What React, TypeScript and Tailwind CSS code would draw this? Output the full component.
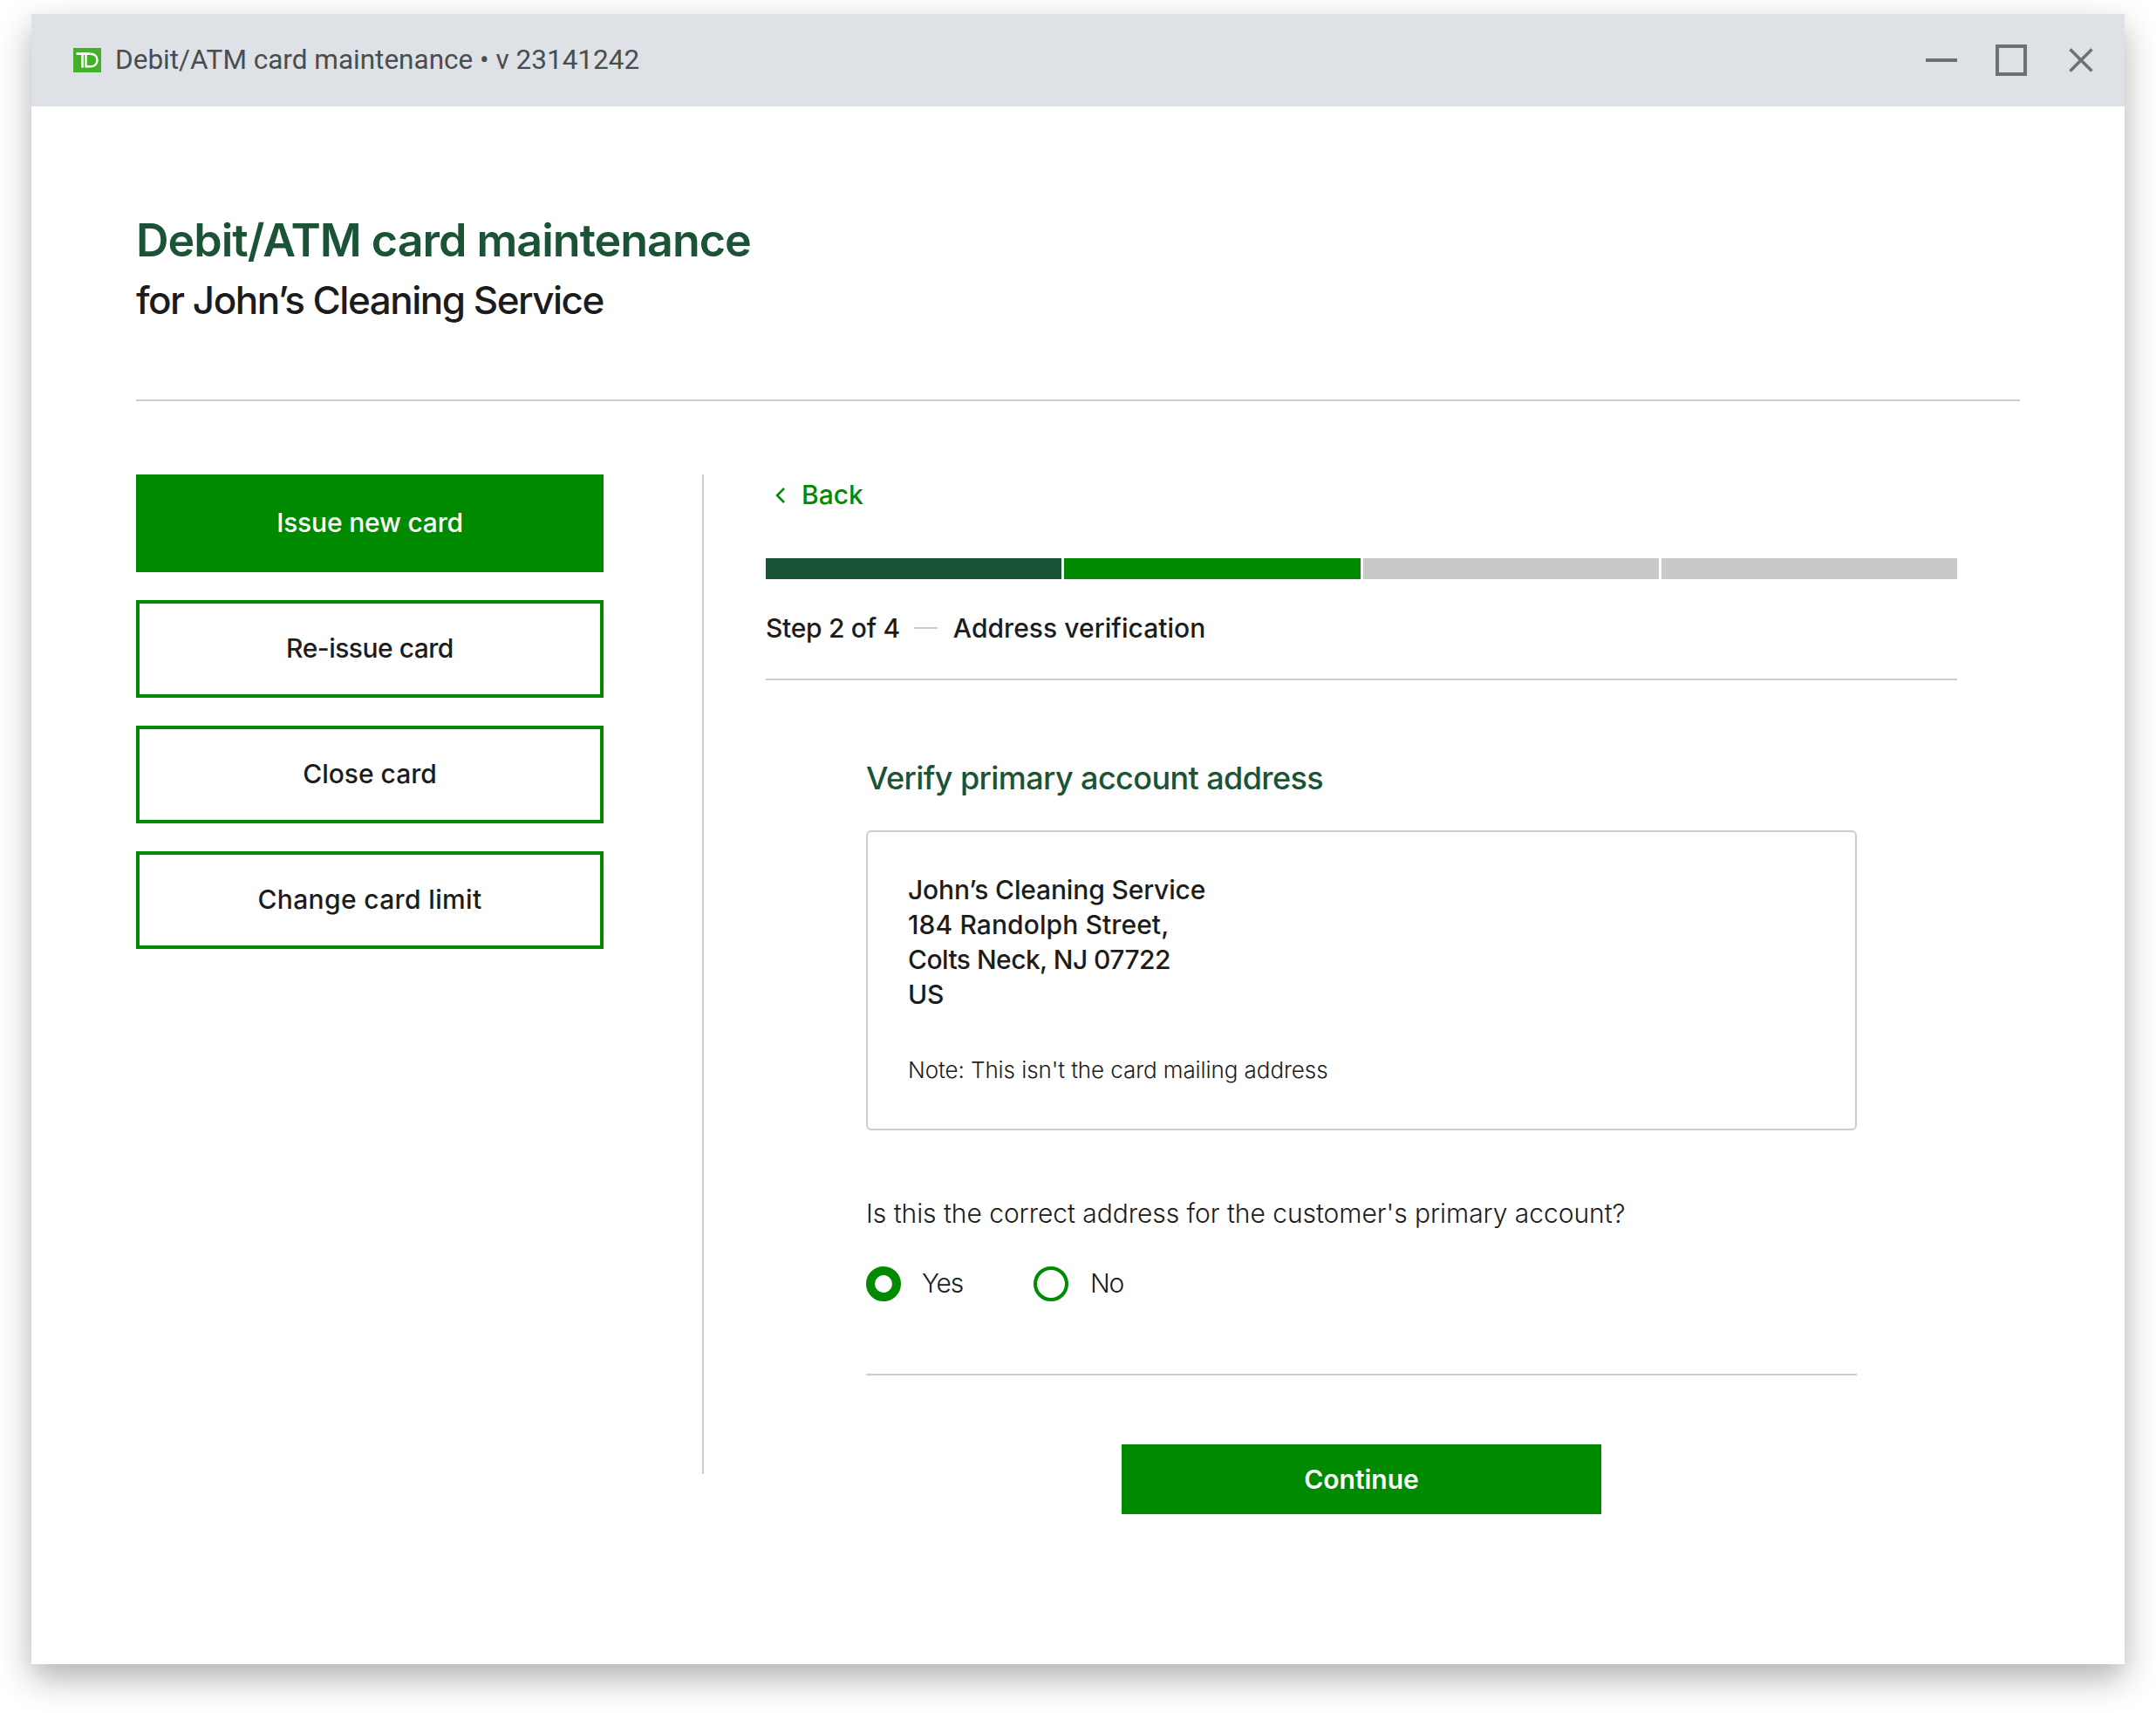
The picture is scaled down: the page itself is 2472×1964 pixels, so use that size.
const sideButtons = [
  { label: 'Re-issue card', tracking: 'tracking-[-0.5px]' },
  { label: 'Close card', tracking: 'tracking-normal' },
  { label: 'Change card limit', tracking: 'tracking-[0.35px]' },
];

function TdLogo() {
  return (
    <svg width="32" height="28" viewBox="0 0 32 28" className="shrink-0">
      <rect width="32" height="28" fill="#43b02a" />
      <path d="M3.500 6.700H19.500M10.500 6.700V22.500" fill="none" stroke="#fff" strokeWidth="2.700" />
      <path d="M14.500 6.700V21.300h5c5 0 8-3 8-7.300s-3-7.300-8-7.300" fill="none" stroke="#fff" strokeWidth="2.500" />
    </svg>
  );
}

function WindowControls() {
  return (
    <div className="flex items-center">
      <div className="w-9 h-1 bg-[#707070]" />
      <div className="w-9 h-9 border-4 border-[#707070] ml-11" />
      <svg width="28" height="28" viewBox="0 0 28 28" className="ml-12">
        <path d="M1.500 1.500l25 25M26.500 1.500l-25 25" stroke="#707070" strokeWidth="3.500" fill="none" />
      </svg>
    </div>
  );
}

export default function App() {
  return (
    <div className="w-[2472px] h-[1964px] bg-white pl-9 pt-4 font-['Inter',sans-serif] text-[#1c1c1c]">
      <div className="w-[2400px] h-[1892px] bg-white flex flex-col shadow-[0_16px_36px_rgba(0,0,0,0.31)]">
        {/* Title bar */}
        <div className="h-[106px] bg-[#dee1e5] flex items-center justify-between pl-12 pr-9">
          <div className="flex items-center gap-4">
            <TdLogo />
            <span className="font-['Roboto',sans-serif] text-[31.5px] text-[#4a4d50]">Debit/ATM card maintenance • v 23141242</span>
          </div>
          <WindowControls />
        </div>

        <div className="flex-1 px-[120px]">
          {/* Heading */}
          <div className="h-[338px] border-b-2 border-[#cccccc] pt-[123px]">
            <h1 className="text-[52px] leading-[62px] font-semibold tracking-[-1px] text-[#1a5336]">Debit/ATM card maintenance</h1>
            <h2 className="text-[44px] leading-[52px] mt-[11px] font-medium tracking-[-1.5px]">for John’s Cleaning Service</h2>
          </div>

          <div className="flex pt-[84px]">
            {/* Left actions */}
            <div className="w-[536px] flex flex-col gap-8">
              <div className="h-[112px] pb-[2px] bg-[#008a00] text-white text-[30px] font-medium tracking-[-0.2px] flex items-center justify-center">Issue new card</div>
              {sideButtons.map((item) => (
                <div key={item.label} className={`h-[112px] pb-[2px] border-4 border-[#008a00] text-[30px] font-medium flex items-center justify-center ${item.tracking}`}>
                  {item.label}
                </div>
              ))}
            </div>

            <div className="w-[2px] h-[1146px] bg-[#cccccc] ml-[113px]" />

            {/* Step content */}
            <div className="w-[1366px] ml-[71px]">
              <div className="flex items-center h-[48px] pb-[1px] text-[30px] font-medium text-[#008a00]">
                <svg width="13" height="20" viewBox="0 0 13 20" className="ml-[10px]">
                  <path d="M11 2L3 10l8 8" fill="none" stroke="#008a00" strokeWidth="2.500" />
                </svg>
                <span className="ml-[18px]">Back</span>
              </div>

              <div className="flex gap-[3px] mt-[48px]">
                <div className="h-6 flex-1 bg-[#1a5336]" />
                <div className="h-6 flex-1 bg-[#008a00]" />
                <div className="h-6 flex-1 bg-[#c9c9c9]" />
                <div className="h-6 flex-1 bg-[#c9c9c9]" />
              </div>

              <div className="flex items-center h-[116px] border-b-2 border-[#cccccc] pb-[2px] text-[30px] font-medium">
                <span className="tracking-[-0.3px]">Step 2 of 4</span>
                <div className="w-[27px] h-[2px] bg-[#cccccc] ml-4 mr-[18px]" />
                <span className="tracking-[0.05px]">Address verification</span>
              </div>

              <div className="w-[1136px] mx-auto pt-[87px]">
                <h3 className="text-[36px] leading-[50px] font-medium tracking-[-0.6px] text-[#1a5336]">Verify primary account address</h3>
                <div className="h-[344px] border-2 border-[#cccccc] rounded-md mt-[35px] pl-[46px] pt-[46px]">
                  <div className="text-[30px] leading-[40px] font-medium">
                    <div className="tracking-[-0.15px]">John’s Cleaning Service</div>
                    <div className="tracking-[0.1px]">184 Randolph Street,</div>
                    <div className="tracking-[-0.55px]">Colts Neck, NJ 07722</div>
                    <div className="tracking-[-0.2px]">US</div>
                  </div>
                  <div className="text-[26px] leading-[34px] mt-[50px] font-light tracking-[-0.08px] text-[#1c1c1c]">Note: This isn't the card mailing address</div>
                </div>

                <div className="text-[30px] leading-[40px] mt-[75px] font-light tracking-[-0.05px]">Is this the correct address for the customer's primary account?</div>

                <div className="flex items-center mt-[38px] text-[30px] font-light tracking-[-1.2px]">
                  <div className="w-10 h-10 rounded-full border-[10px] border-[#008a00] bg-white" />
                  <span className="ml-6">Yes</span>
                  <div className="w-10 h-10 rounded-full border-4 border-[#008a00] ml-[81px]" />
                  <span className="ml-[25px]">No</span>
                </div>

                <div className="h-[2px] bg-[#cccccc] mt-[81px]" />

                <div className="w-[550px] h-[80px] mx-auto mt-[79px] bg-[#008a00] text-white text-[30px] font-semibold flex items-center justify-center">Continue</div>
              </div>
            </div>
          </div>
        </div>
      </div>
    </div>
  );
}
